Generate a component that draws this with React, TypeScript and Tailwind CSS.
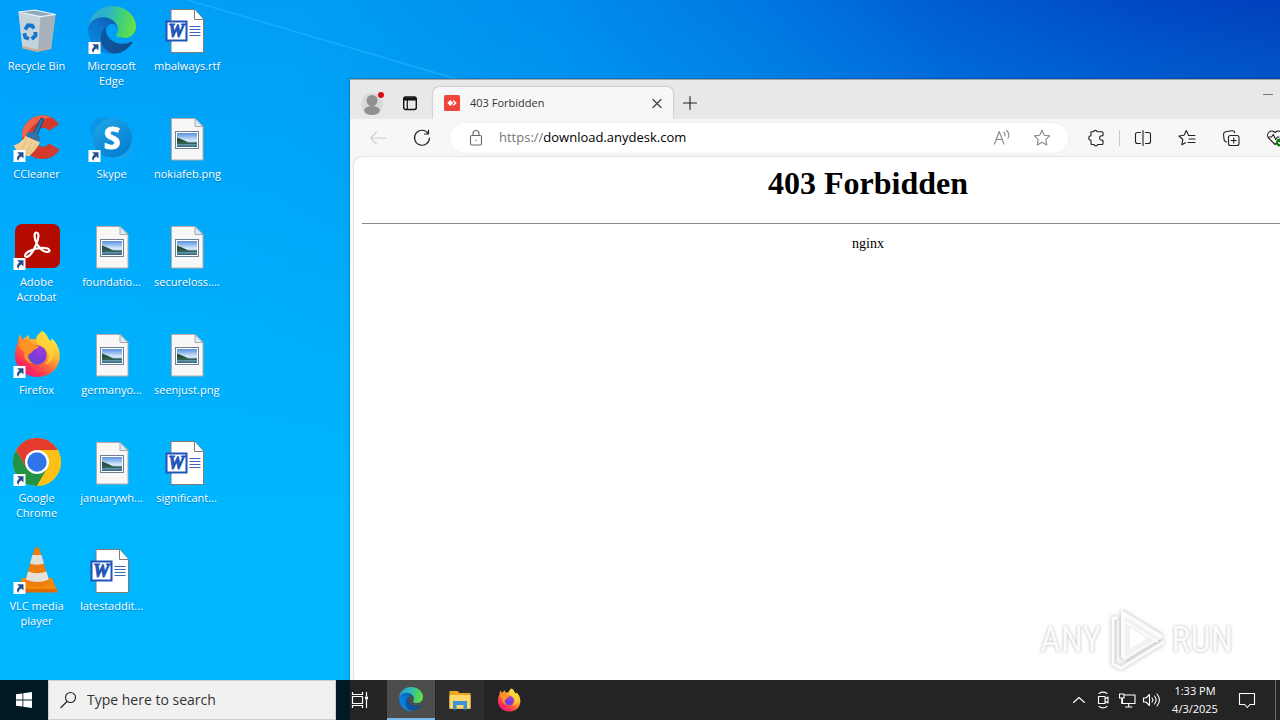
import { clsx } from "clsx";
import { ReactNode } from "react";

const ShortcutArrow = () => (
  <g>
    <rect x="0.5" y="36" width="12" height="12" fill="#fff" />
    <path
      d="M4.2 38.2h6.300v6.400l-2-2c-2 .8-2.900 2-2.800 4.100-2-1-2.600-3.800.6-6.300z"
      fill="#24508f"
    />
  </g>
);

const EdgeLogo = () => (
  <>
    <defs>
      <linearGradient id="edgeDark" x1="60" y1="180" x2="240" y2="180" gradientUnits="userSpaceOnUse">
        <stop offset="0" stopColor="#0c59a4" />
        <stop offset="1" stopColor="#114a8b" />
      </linearGradient>
      <linearGradient id="edgeMid" x1="150" y1="100" x2="50" y2="220" gradientUnits="userSpaceOnUse">
        <stop offset="0" stopColor="#0d62b4" />
        <stop offset="0.4" stopColor="#0c74cb" />
        <stop offset="1" stopColor="#0a84dc" />
      </linearGradient>
      <linearGradient id="edgeTop" x1="10" y1="60" x2="250" y2="110" gradientUnits="userSpaceOnUse">
        <stop offset="0" stopColor="#2fa6d8" />
        <stop offset="0.4" stopColor="#2cb5c5" />
        <stop offset="0.7" stopColor="#40cf7a" />
        <stop offset="1" stopColor="#66e045" />
      </linearGradient>
    </defs>
    <g transform="translate(-0.87 -0.92) scale(0.1875)">
      <path
        fill="url(#edgeDark)"
        d="M235.68 195.46a93.73 93.73 0 0 1-10.54 4.71 101.87 101.87 0 0 1-35.9 6.46c-47.32 0-88.54-32.55-88.54-74.32A31.48 31.48 0 0 1 117.13 105c-42.8 1.8-53.8 46.4-53.8 72.53 0 73.88 68.09 81.37 82.76 81.37 7.91 0 19.84-2.3 27-4.56l1.31-.44a128.34 128.34 0 0 0 66.6-52.8 4 4 0 0 0-5.32-5.64Z"
      />
      <path
        fill="url(#edgeMid)"
        d="M110.34 246.34A79.2 79.2 0 0 1 87.6 225a80.72 80.72 0 0 1 29.53-120c3.12-1.47 8.45-4.13 15.54-4a32.35 32.35 0 0 1 25.69 13 31.88 31.88 0 0 1 6.36 18.66c0-.21 24.46-79.6-80-79.6-43.9 0-80 41.66-80 78.21a130.15 130.15 0 0 0 12.11 56 128 128 0 0 0 156.38 67.11 75.55 75.55 0 0 1-62.78-8Z"
      />
      <path
        fill="url(#edgeTop)"
        d="M156.94 153.78c-.81 1.05-3.3 2.5-3.3 5.66 0 2.61 1.7 5.12 4.72 7.23 14.38 10 41.49 8.68 41.56 8.68a59.56 59.56 0 0 0 30.27-8.35 61.38 61.38 0 0 0 30.43-52.88c.26-22.41-8-37.31-11.34-43.91C228.09 28.76 182.35 4.92 132.61 4.92a128 128 0 0 0-128 126.2c.48-36.54 36.8-66.05 80-66.05 3.5 0 23.46.34 42 10.07 16.34 8.58 24.9 18.94 30.85 29.21 6.18 10.67 7.28 24.15 7.28 29.52s-2.74 13.33-7.8 19.91Z"
      />
    </g>
  </>
);

const FirefoxLogo = () => (
  <>
    <defs>
      <linearGradient id="foxBody" x1="40" y1="6" x2="10" y2="44" gradientUnits="userSpaceOnUse">
        <stop offset="0" stopColor="#fff04c" />
        <stop offset="0.3" stopColor="#ffb92e" />
        <stop offset="0.55" stopColor="#ff7139" />
        <stop offset="0.8" stopColor="#fb3055" />
        <stop offset="1" stopColor="#e81a7c" />
      </linearGradient>
      <radialGradient id="foxGlobe" cx="0.65" cy="0.25" r="0.8">
        <stop offset="0" stopColor="#a03be0" />
        <stop offset="0.6" stopColor="#7a3bd8" />
        <stop offset="1" stopColor="#5b50d8" />
      </radialGradient>
    </defs>
    <path
      fill="url(#foxBody)"
      d="M29.500 1c2.500 1.800 5.200 5 6.300 8.600 1 .6 1.600.9 2.200 1.700.5-1 .7-2 .6-3 4.200 3.400 7.900 9.700 8.100 16.500C47.200 38 37.500 47 24.500 47 11.500 47 2 37.600 2 25.500c0-5 1.200-9 2.800-12.500-.1-3 .9-6.200 2.600-8.700.7 2.500 1.500 4.500 2.500 5.500 1-2 4-4.400 7-4.900-1 1.500-1 3 .1 4.400C20 8.500 21.500 9 22.500 9.500 23.500 6 26 3 29.500 1z"
    />
    <circle cx="24" cy="25" r="9.700" fill="url(#foxGlobe)" />
    <path
      d="M5.800 14c4-3.500 9-4.500 11.500-2 3 2.800 5.700 3.600 8.700 4.200-.6 2.600-5.700 3-6.400 5.100-.5 2.200-3.900 1.700-4.300 4.300-.4 3.500 2 6.500 5.200 7.800-7.500 0-10.500-6-9-11.500C9 20.500 6.500 19 5.800 14z"
      fill="#ff9225"
    />
    <path
      d="M29.500 1c-5 4-7 9.500-4.500 13.500 3.500 2.400 8.500 3.500 10.500 9 1.500 5-1 9-4.500 11 8.500-1 12-9 9.500-16C38.500 13 34 8 29.500 1z"
      fill="#ffd53a"
      opacity=".75"
    />
  </>
);

const RecycleBinLogo = () => (
  <>
    <path d="M5.500 6 22 4l20.500 4.500L38 43l-15 2.500L9.500 42z" fill="#b9c8d2" />
    <path d="M5.500 6 27.500 10.500 25 45.500 9.500 42z" fill="#c5d3dd" />
    <path d="m27.500 10.500 15-2L38 41.500l-13 4z" fill="#a6b1bb" />
    <path d="M5.500 6 22 4l20.500 4.500-15 2.200z" fill="#8faabb" stroke="#eef5f9" strokeWidth="1.200" />
    <path d="m9 40 16 3.500L38.300 40l-.3 2.500-13 3.500-15.500-3.500z" fill="#c3ad97" />
    <g fill="none" stroke="#1277cc" strokeWidth="3.800">
      <path d="m12.200 23.500 2.800-4.200 4 .2 2 3" />
      <path d="m22.300 26 .2 3.700-3.800 3.300" />
      <path d="m16 32.800-3.500-1.200-1.300-4.300" />
    </g>
  </>
);

const CCleanerLogo = () => (
  <>
    <path
      d="M46 10.500C41.500 4 36.500 1.500 30 1.500 17.500 1.500 9 10.500 9 23c0 13 8.500 22 20 22 8 0 13.500-3 17.500-9.500L36 29.500c-2 2.500-3.800 3.300-6 3.300-4.500 0-7-4-7-9.500s3-9.500 7-9.500c2.500 0 4.500.9 6 2.900z"
      fill="#d13a2c"
    />
    <path d="M9 23C9 10.500 17.500 1.500 30 1.500c3 0 6 .6 8.500 1.900C28 4 17 11 13 23z" fill="#ee6549" />
    <path d="m28 4 2.800 1.200-7 17-4.300-2z" fill="#2d71ae" stroke="#164b7c" />
    <path d="M15 18.500c4-1.500 10 1 12.500 5.500l-2 3.500-13-5.500z" fill="#3073aa" />
    <path d="M12.500 22 27 28.500c-3 5.500-6.500 9.500-11 14L9 40l-4-1.500-4.500-7C6 30 9 27 12.500 22z" fill="#f0cf98" />
    <path d="m14 25-5 10m10-7-6 12m10-10-7 10" stroke="#dfba7a" fill="none" />
  </>
);

const SkypeLogo = () => (
  <>
    <defs>
      <linearGradient id="skype" x1="0" y1="0" x2="0.6" y2="1">
        <stop offset="0" stopColor="#22a6e6" />
        <stop offset="1" stopColor="#0580d3" />
      </linearGradient>
    </defs>
    <circle cx="15.500" cy="16" r="13" fill="#0a95e6" />
    <circle cx="33" cy="33" r="12" fill="#12a5ee" />
    <circle cx="24.500" cy="24" r="19.500" fill="url(#skype)" />
    <text
      x="24"
      y="34.500"
      textAnchor="middle"
      fontFamily="Open Sans, sans-serif"
      fontWeight="700"
      fontSize="30"
      fill="#fff"
      stroke="#fff"
    >
      S
    </text>
  </>
);

const AcrobatLogo = () => (
  <>
    <rect x="2" y="2" width="45" height="44" rx="7" fill="#b30b00" />
    <g fill="none" stroke="#fff" strokeWidth="2.200" strokeLinejoin="round">
      <path d="M23.300 10.500c3.200 0 2.500 6-.3 12.500-3 6.800-6.800 11.800-9.500 11.800-2.500 0-2-3.300 2.500-5.500 5-2.500 11.500-3.800 16-3.300 5 .4 5.800 3.800 2.500 4-3.500.2-8-3.500-10.500-8-2.500-4.200-3.500-11.500-.7-11.500z" />
    </g>
  </>
);

const ChromeLogo = () => (
  <>
    <circle cx="24" cy="24" r="24" fill="#fbc116" />
    <path d="M3.200 12A24 24 0 0 1 44.800 12H24z" fill="#e33b2e" />
    <path d="M3.200 12A24 24 0 0 0 24 48l10.400-18-20.800 0z" fill="#229342" />
    <path d="M3.200 12 13.600 30 24 12z" fill="#e33b2e" />
    <path d="M24 12h20.800A24 24 0 0 1 24 48l10.400-18z" fill="#fbc116" />
    <circle cx="24" cy="24" r="12" fill="#fff" />
    <circle cx="24" cy="24" r="9.700" fill="#2f74e8" />
  </>
);

const VlcLogo = () => (
  <>
    <path d="M9 32h30l5.500 14h-41z" fill="#f58a0a" />
    <path d="M3.500 43h41v3.500h-41z" fill="#dc6b04" />
    <path d="M21.500 3q2.500-4 5 0l10 34q-12.500 7-25 0z" fill="#ef7d0e" />
    <path d="M19.500 9h9l2.500 8.500q-7 2.500-14 0z" fill="#e3e0dc" />
    <path d="M15 25.500q9 3.500 18.500 0l2.300 8q-11.500 5-23 0z" fill="#e3e0dc" />
  </>
);

const ImageFile = () => (
  <>
    <defs>
      <linearGradient id="photoSky" x1="0" y1="0" x2="0" y2="1">
        <stop offset="0" stopColor="#5a8fe0" />
        <stop offset="0.550" stopColor="#d9ecfa" />
        <stop offset="0.750" stopColor="#7fa9bd" />
        <stop offset="1" stopColor="#29627a" />
      </linearGradient>
    </defs>
    <path d="M8.500 4.500h23.500l8 8v33.500H8.500z" fill="#f7f7f7" stroke="#b3aaa5" />
    <path d="M32 4.500v8h8z" fill="#d8ecf8" stroke="#a8a8a8" />
    <rect x="12.500" y="17.500" width="23" height="17" fill="#fff" stroke="#6d7f90" />
    <rect x="14" y="19" width="20" height="14" fill="url(#photoSky)" />
    <path d="M14 23.500c3 1 8 3.500 12 5.200H14z" fill="#24503f" />
    <path d="M14 28.500h20v1.500H14z" fill="#2e5d55" />
  </>
);

const WordFile = () => (
  <>
    <path d="M8 3.500h24l8.500 10v33H8z" fill="#fff" stroke="#7c7c7c" />
    <path d="M31.500 3.500v10h9" fill="#fff" stroke="#7c7c7c" />
    <path d="M26.500 20.500h11M26.500 23.500h11M26.500 26.500h11M26.500 29.500h11" stroke="#3a67b8" />
    <rect x="3.500" y="15.500" width="20" height="19" fill="#fff" stroke="#1f55b5" strokeWidth="2" />
    <text
      x="13.300"
      y="31"
      textAnchor="middle"
      fontFamily="Liberation Serif, serif"
      fontStyle="italic"
      fontWeight="700"
      fontSize="18"
      stroke="#1f55b5"
      fill="#1f55b5"
    >
      W
    </text>
  </>
);

type DesktopItem = { label: string; logo: () => ReactNode; shortcut?: boolean };

const desktopItems: DesktopItem[] = [
  { label: "Recycle Bin", logo: RecycleBinLogo },
  { label: "CCleaner", logo: CCleanerLogo, shortcut: true },
  { label: "Adobe Acrobat", logo: AcrobatLogo, shortcut: true },
  { label: "Firefox", logo: FirefoxLogo, shortcut: true },
  { label: "Google Chrome", logo: ChromeLogo, shortcut: true },
  { label: "VLC media player", logo: VlcLogo, shortcut: true },
  { label: "Microsoft Edge", logo: EdgeLogo, shortcut: true },
  { label: "Skype", logo: SkypeLogo, shortcut: true },
  { label: "foundatio...", logo: ImageFile },
  { label: "germanyo...", logo: ImageFile },
  { label: "januarywh...", logo: ImageFile },
  { label: "latestaddit...", logo: WordFile },
  { label: "mbalways.rtf", logo: WordFile },
  { label: "nokiafeb.png", logo: ImageFile },
  { label: "secureloss....", logo: ImageFile },
  { label: "seenjust.png", logo: ImageFile },
  { label: "significant...", logo: WordFile },
];

const DesktopIcon = ({ label, logo: Logo, shortcut }: DesktopItem) => (
  <button className="flex flex-col items-center gap-1 pt-1.5 pr-0.5">
    <svg viewBox="0 0 48 48" className="h-12 w-12">
      <Logo />
      {shortcut && <ShortcutArrow />}
    </svg>
    <span className="w-full px-1 text-center text-[11px] leading-[15px] text-white [text-shadow:0_1px_1px_rgba(0,40,90,0.4)]">
      {label}
    </span>
  </button>
);

const LineIcon = ({ children, className }: { children: ReactNode; className?: string }) => (
  <svg
    viewBox="0 0 20 20"
    fill="none"
    stroke="currentColor"
    strokeWidth="1.100"
    strokeLinecap="round"
    strokeLinejoin="round"
    className={clsx("h-5 w-5 shrink-0", className)}
  >
    {children}
  </svg>
);

const ToolbarButton = ({ label, children, className }: { label: string; children: ReactNode; className?: string }) => (
  <button aria-label={label} className={clsx("flex h-8 w-11 shrink-0 items-center justify-center", className)}>
    <LineIcon>{children}</LineIcon>
  </button>
);

const TabStrip = () => (
  <div className="flex h-10 items-end border-t border-[#a5a5a5] bg-[#e8e8e8]">
    <div className="flex h-8 flex-1 items-end">
      <button aria-label="Profile" className="flex h-8 w-[46px] items-center justify-center">
        <svg viewBox="0 0 26 26" className="h-[26px] w-[26px]">
          <circle cx="12" cy="14" r="11" fill="#dad9d8" />
          <circle cx="12" cy="10.500" r="5.500" fill="#91908e" />
          <ellipse cx="12" cy="20.500" rx="8" ry="4.500" fill="#91908e" />
          <circle cx="21" cy="5" r="3" fill="#d90b14" />
        </svg>
      </button>
      <button aria-label="Tab actions" className="flex h-8 w-7 items-center justify-center">
        <svg viewBox="0 0 16 16" className="h-4 w-4">
          <rect x="1.700" y="2" width="12.600" height="12.500" rx="2" fill="none" stroke="#111" strokeWidth="1.400" />
          <path d="M2 2.500h12v3H2z" fill="#111" />
          <path d="M5.300 5v9" stroke="#111" strokeWidth="1.200" />
        </svg>
      </button>
      <div className="ml-[9px] flex h-8 w-60 items-center rounded-t-md bg-[#f7f7f7] pr-2 pl-[11px] shadow-[0_0_2px_rgba(0,0,0,0.35)] [clip-path:inset(-2px_-2px_0_-2px)]">
        <svg viewBox="0 0 16 16" className="h-4 w-4">
          <rect width="16" height="16" rx="1.500" fill="#ef443b" />
          <path d="M6.300 5 9.300 8l-3 3-3-3z" fill="#fff" />
          <path d="M9.700 5 12.700 8l-3 3-1-1 2-2-2-2z" fill="#fff" />
        </svg>
        <span className="flex-1 pl-2.5 text-[11px] leading-4 text-[#333]">403 Forbidden</span>
        <button aria-label="Close tab" className="flex h-4 w-4 items-center justify-center text-[#444]">
          <LineIcon>
            <path d="m6 6.500 8 8m0-8-8 8" strokeWidth="1.300" />
          </LineIcon>
        </button>
      </div>
      <button aria-label="New tab" className="flex h-8 w-[34px] items-center justify-center text-[#222]">
        <LineIcon>
          <path d="M10 3.500v13M3.500 10h13" />
        </LineIcon>
      </button>
    </div>
    <div className="flex h-full items-start">
      {[
        { name: "Minimize", path: "M6.500 9.500h9" },
        { name: "Maximize", path: "M5.500 5.500h9v9h-9z" },
        { name: "Close", path: "m5.500 5.500 9 9m0-9-9 9" },
      ].map(({ name, path }) => (
        <button key={name} aria-label={name} className="flex h-[30px] w-[46px] items-center justify-center text-[#777]">
          <LineIcon>
            <path d={path} />
          </LineIcon>
        </button>
      ))}
    </div>
  </div>
);

const star = "m10 2.300 2.300 5 5.400.6-4 3.700 1.100 5.400L10 14.300 5.200 17l1.100-5.400-4-3.700 5.400-.6z";

const Toolbar = () => (
  <div className="flex h-[38px] items-center bg-[#f7f7f7] pr-[85px] pl-1.5 text-[#222]">
    <ToolbarButton label="Back" className="text-[#cfcfcf]">
      <path d="M17.500 10H2.500m6-6-6 6 6 6" />
    </ToolbarButton>
    <ToolbarButton label="Reload">
      <path d="M16.200 5.500A7.500 7.500 0 1 0 17.500 10M16.500 2v4h-4" strokeWidth="1.200" />
    </ToolbarButton>
    <div className="mx-1.5 flex h-[30px] flex-1 items-center rounded-full bg-white pr-2 pl-4 shadow-[0_0_2px_rgba(0,0,0,0.08)]">
      <button aria-label="Site information" className="text-[#666]">
        <LineIcon>
          <rect x="4.500" y="7.500" width="11" height="9.500" rx="1.500" />
          <path d="M7 7.500V5.500a3 3 0 0 1 6 0v2M10 12v.5" />
        </LineIcon>
      </button>
      <label htmlFor="address" className="pl-[13px] text-[13px] text-[#767676]">
        https://
      </label>
      <input
        id="address"
        defaultValue="download.anydesk.com"
        className="min-w-0 flex-1 bg-transparent text-[13px] text-black outline-none"
      />
      <ToolbarButton label="Read aloud" className="text-[#888]">
        <path d="m2.500 16 4.700-12.500L12 16M4.200 11.500h6M12 4c1 1 1.300 2.500 1 4M14.500 2.500c2.200 1.800 2.800 5 1.500 7.700" />
      </ToolbarButton>
      <button aria-label="Favorite this page" className="flex h-8 w-9 items-center justify-center text-[#888]">
        <LineIcon>
          <path d={star} />
        </LineIcon>
      </button>
    </div>
    <ToolbarButton label="Extensions">
      <path d="M5 3.800h2.500a2 2 0 0 1 3.800 0h4.700a1 1 0 0 1 1 1v3h-1.200a2.200 2.200 0 1 0 0 4.400H17v3.300a1 1 0 0 1-1 1h-4.200a2 2 0 0 1-3.800 0H6a1 1 0 0 1-1-1v-3.300a2.200 2.200 0 0 1 0-4.400z" />
    </ToolbarButton>
    <span className="mx-px h-4 w-px bg-[#c8c8c8]" />
    <ToolbarButton label="Split screen">
      <path d="M10 2.500v15M7.500 4.500h-3a2 2 0 0 0-2 2v7a2 2 0 0 0 2 2h3M12.500 4.500h3a2 2 0 0 1 2 2v7a2 2 0 0 1-2 2h-3" />
    </ToolbarButton>
    <ToolbarButton label="Favorites">
      <path d="M11.500 7.200 9.300 2.500 7 7.300l-5 .7 3.800 3.500-1 5.200 3.700-2M11.500 7.500H18M12 11h6M11 14.500h7" />
    </ToolbarButton>
    <ToolbarButton label="Collections">
      <rect x="7.500" y="7.500" width="10.500" height="10" rx="2" />
      <path d="M12.700 10v5M10.200 12.500h5M5.500 14C3.500 13.500 3 12.500 3 11l-.5-4.500c0-1.500.8-2.500 2-2.700l6.500-1c1.500-.2 2.500.7 2.800 2" />
    </ToolbarButton>
    <button aria-label="Browser essentials" className="flex h-8 w-11 items-center justify-center">
      <LineIcon>
        <path d="M10 16.500 3.500 10a4.200 4.200 0 0 1 6.500-5.400 4.200 4.200 0 0 1 6.500 5.400zM3 9h3.500l1.700-2.500 2.500 5L12.500 9H14" />
        <circle cx="15" cy="14.500" r="4" fill="#107c10" stroke="none" />
        <path d="m13.500 14.500 1 1 2-2" stroke="#fff" />
      </LineIcon>
    </button>
  </div>
);

const AnyRunMark = () => (
  <div className="absolute right-[47px] bottom-2 flex items-center font-['Roboto_Condensed','Liberation_Sans_Narrow','Liberation_Sans',sans-serif] text-4xl text-[#fbfbfb] [text-shadow:0_0_3px_rgba(0,0,0,0.3)]">
    <span>ANY</span>
    <svg viewBox="0 0 60 64" className="mr-1 ml-1.5 h-16 w-[60px] drop-shadow-[0_0_2px_rgba(0,0,0,0.3)]" fill="none" stroke="#fbfbfb">
      <path d="M16 4v50l39-25z" fill="#f1f1f1" stroke="none" />
      <path d="M16 50V5l39 24" strokeWidth="4" />
      <path d="m17 13 34 21" strokeWidth="2" />
      <path d="M11 10H6v46l8 4 43-26" strokeWidth="3" />
      <path d="M11 12v40" strokeWidth="1.500" />
      <path d="m16 51 39-22" strokeWidth="2" />
      <path d="M23 20v21l17-11z" fill="#fff" stroke="none" />
    </svg>
    <span>RUN</span>
  </div>
);

const BrowserWindow = () => (
  <section className="absolute top-[79px] -right-[102px] bottom-0 left-[350px] flex flex-col bg-[#f7f7f7] shadow-[0_0_2px_rgba(0,0,0,0.5)]">
    <TabStrip />
    <Toolbar />
    <main className="ml-1 flex-1 rounded-tl-lg bg-white px-2 text-center font-['Liberation_Serif',serif] text-black shadow-[0_0_2px_rgba(0,0,0,0.25)]">
      <h1 className="pt-2 text-[32px] leading-[37px] font-bold">403 Forbidden</h1>
      <hr className="mt-[21px] mb-[11px] border-t border-[#888]" />
      <p className="text-sm leading-[18px]">nginx</p>
    </main>
  </section>
);

const TaskbarButton = ({ label, children, className }: { label: string; children: ReactNode; className?: string }) => (
  <button aria-label={label} className={clsx("flex h-10 w-12 shrink-0 items-center justify-center", className)}>
    {children}
  </button>
);

const Taskbar = () => (
  <footer className="flex h-10 shrink-0 items-center bg-[linear-gradient(to_right,#001923_350px,#242424_350px)] text-white">
    <TaskbarButton label="Start">
      <svg viewBox="0 0 16 16" className="h-4 w-4" fill="#fff">
        <path d="M0 2.300 6.500 1.400v6.200H0zM7.300 1.300 16 0v7.600H7.300zM0 8.400h6.500v6.200L0 13.700zM7.300 8.400H16V16l-8.700-1.300z" />
      </svg>
    </TaskbarButton>
    <div className="flex h-10 w-72 items-center border border-[#cfcfcf] bg-[#f1f1f1] pl-2.5 text-[#222]">
      <label htmlFor="search" aria-label="Search">
        <LineIcon>
          <circle cx="11.500" cy="7.500" r="5" />
          <path d="m8 11.500-6 6" strokeWidth="1.300" />
        </LineIcon>
      </label>
      <input
        id="search"
        placeholder="Type here to search"
        className="min-w-0 flex-1 bg-transparent pl-2 text-sm outline-none placeholder:text-[#333]"
      />
    </div>
    <TaskbarButton label="Task View" className="mr-[3px]">
      <svg viewBox="0 0 18 18" className="h-[18px] w-[18px]" fill="none" stroke="#fff" strokeWidth="1.200">
        <path d="M1.500 1v2.500h10V1M1.500 17v-2.500h10V17M1.500 5.500h10v7h-10zM15.500 1v4M15.500 9v8" />
        <path d="M14 5.500h3v3h-3z" fill="#fff" stroke="none" />
      </svg>
    </TaskbarButton>
    <TaskbarButton label="Microsoft Edge" className="border-b-2 border-[#76b9ed] bg-[#4d4d4d]">
      <svg viewBox="0 0 48 48" className="h-6 w-6">
        <EdgeLogo />
      </svg>
    </TaskbarButton>
    <TaskbarButton label="File Explorer" className="ml-px bg-[#2d2d2d]">
      <svg viewBox="0 0 24 24" className="h-6 w-6">
        <path d="M1.500 3h8l2 2h11v16h-21z" fill="#e8a820" />
        <path d="M1.500 7h21v13.500h-21z" fill="#ffd76a" />
        <path d="M5 13h14v8.500h-3.500v-4.500h-7v4.500H5z" fill="#3b92d6" />
      </svg>
    </TaskbarButton>
    <TaskbarButton label="Firefox" className="ml-px">
      <svg viewBox="0 0 48 48" className="h-6 w-6">
        <FirefoxLogo />
      </svg>
    </TaskbarButton>
    <div className="ml-auto flex items-center">
      <button aria-label="Show hidden icons" className="flex w-6 justify-center">
        <LineIcon>
          <path d="m4.500 12.500 5.500-5 5.500 5" />
        </LineIcon>
      </button>
      <button aria-label="Meet Now" className="flex w-6 justify-center">
        <LineIcon>
          <path d="M5.500 6.500h6.500v7H5.500zM12 9l3-2v6l-3-2M6 3.500c2.500-1.700 5.500-1.700 8 0M6 16.500c2.500 1.700 5.500 1.700 8 0" />
        </LineIcon>
      </button>
      <button aria-label="Network" className="flex w-6 justify-center">
        <LineIcon>
          <path d="M7.500 5H18v8.500H5.500V9M2.500 4h4.500v4H2.500zM4.700 8v5.500M11.700 13.500V17M8.500 17H15" />
        </LineIcon>
      </button>
      <button aria-label="Volume" className="flex w-6 justify-center">
        <LineIcon>
          <path d="M2.500 8H5l3.500-3.500v11L5 12H2.500zM11 8c1 1.200 1 2.800 0 4M13.500 6c2 2.500 2 5.500 0 8M16 4c3 3.700 3 8.300 0 12" />
        </LineIcon>
      </button>
      <button className="w-16 text-center text-[11px] leading-[18px]">
        1:33 PM
        <br />
        4/3/2025
      </button>
      <TaskbarButton label="Notifications" className="-ml-1">
        <LineIcon>
          <path d="M2.500 3.500h15v11H13l-2.700 3-2.700-3H2.500z" />
        </LineIcon>
      </TaskbarButton>
      <button aria-label="Show desktop" className="ml-1 h-10 w-[5px] border-l border-[#6b6b6b]" />
    </div>
  </footer>
);

const App = () => {
  return (
    <div className="flex h-screen flex-col overflow-hidden font-['Open_Sans',sans-serif]">
      <div className="relative flex-1 overflow-hidden bg-[linear-gradient(to_bottom,rgba(0,182,255,0)_0%,rgba(0,182,255,0.7)_45%,#00b6ff_75%),linear-gradient(100deg,#009ffa_0%,#009df4_22%,#008dec_40%,#0078e2_54%,#005bd2_68%,#0048c4_82%,#0338b6_100%)]">
        <svg viewBox="0 0 1280 680" className="absolute inset-0 h-full w-full" preserveAspectRatio="none">
          <path d="M190 0 460 79h-7L185 0z" fill="#3cc0ff" opacity=".4" />
        </svg>
        <div className="relative grid auto-cols-[75px] grid-flow-col grid-rows-[repeat(6,108px)]">
          {desktopItems.map((item) => (
            <DesktopIcon key={item.label} {...item} />
          ))}
        </div>
        <BrowserWindow />
        <AnyRunMark />
      </div>
      <Taskbar />
    </div>
  );
};

export default App;
